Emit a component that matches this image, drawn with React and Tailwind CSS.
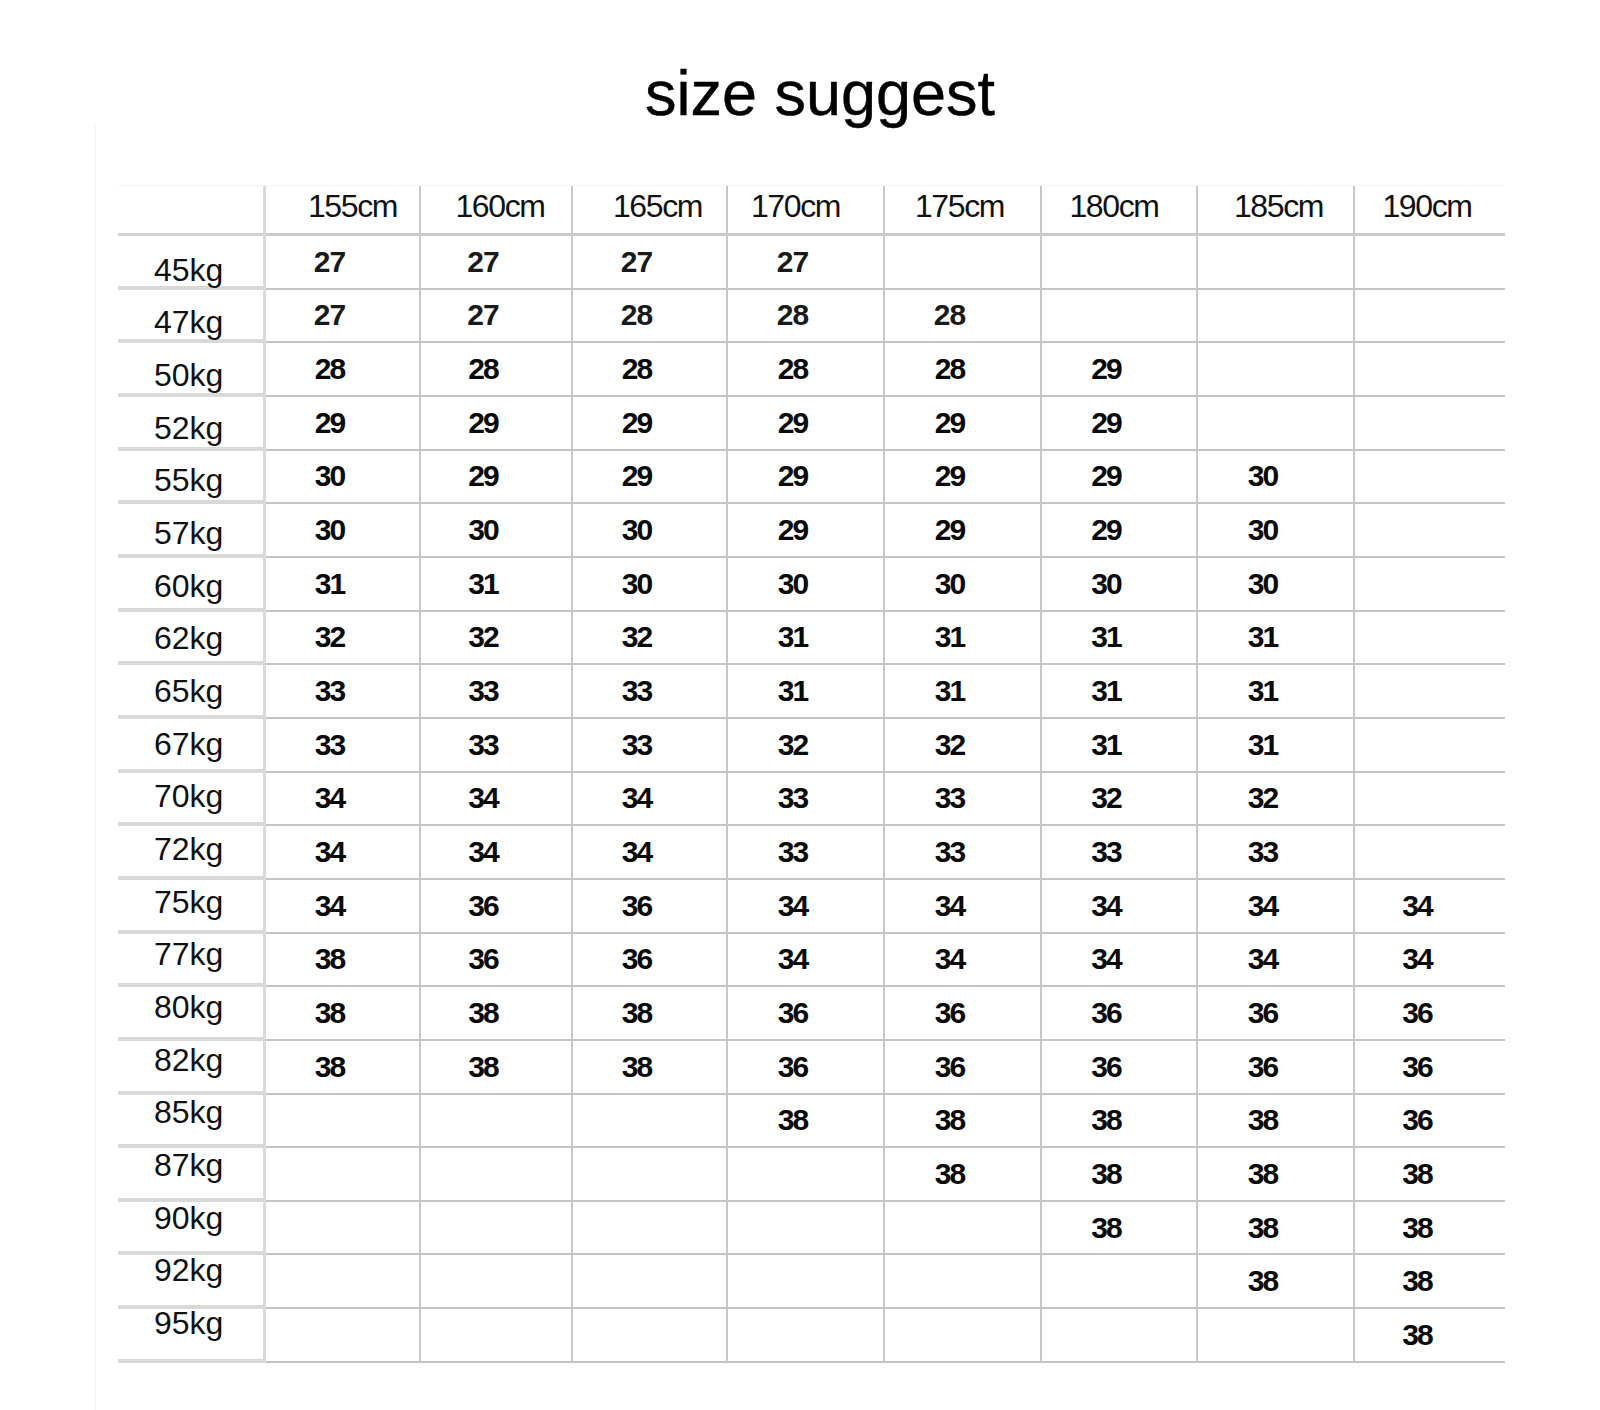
import React from "react";

const heights = ["155cm", "160cm", "165cm", "170cm", "175cm", "180cm", "185cm", "190cm"];

const headerPad = [
  "pl-[20px]",
  "pl-[8px]",
  "pl-[16px]",
  "pr-[20px]",
  "pr-[6px]",
  "pr-[10px]",
  "pl-[6px]",
  "pr-[6px]",
];

const colW = [
  "w-[155px]",
  "w-[152px]",
  "w-[155px]",
  "w-[157px]",
  "w-[157px]",
  "w-[156px]",
  "w-[157px]",
  "w-[150px]",
];

const rows = [
  ["45kg", [27, 27, 27, 27, null, null, null, null]],
  ["47kg", [27, 27, 28, 28, 28, null, null, null]],
  ["50kg", [28, 28, 28, 28, 28, 29, null, null]],
  ["52kg", [29, 29, 29, 29, 29, 29, null, null]],
  ["55kg", [30, 29, 29, 29, 29, 29, 30, null]],
  ["57kg", [30, 30, 30, 29, 29, 29, 30, null]],
  ["60kg", [31, 31, 30, 30, 30, 30, 30, null]],
  ["62kg", [32, 32, 32, 31, 31, 31, 31, null]],
  ["65kg", [33, 33, 33, 31, 31, 31, 31, null]],
  ["67kg", [33, 33, 33, 32, 32, 31, 31, null]],
  ["70kg", [34, 34, 34, 33, 33, 32, 32, null]],
  ["72kg", [34, 34, 34, 33, 33, 33, 33, null]],
  ["75kg", [34, 36, 36, 34, 34, 34, 34, 34]],
  ["77kg", [38, 36, 36, 34, 34, 34, 34, 34]],
  ["80kg", [38, 38, 38, 36, 36, 36, 36, 36]],
  ["82kg", [38, 38, 38, 36, 36, 36, 36, 36]],
  ["85kg", [null, null, null, 38, 38, 38, 38, 36]],
  ["87kg", [null, null, null, null, 38, 38, 38, 38]],
  ["90kg", [null, null, null, null, null, 38, 38, 38]],
  ["92kg", [null, null, null, null, null, null, 38, 38]],
  ["95kg", [null, null, null, null, null, null, null, 38]],
];

function vBorder(ci) {
  return ci === 7 ? "" : "border-r-2 border-r-[#c8c8c8]";
}

export default function App() {
  return (
    <div className="w-[1600px] h-[1410px] bg-white overflow-hidden font-['Liberation_Sans',Arial,sans-serif] text-[#111]">
      {/* title */}
      <div className="flex justify-center pl-[40px] pt-[62px]">
        <h1 className="text-[63px] leading-[63px] h-[63px] font-normal text-[#000] whitespace-nowrap [-webkit-text-stroke:0.4px_#000]">
          size suggest
        </h1>
      </div>

      {/* sheet */}
      <div className="ml-[95px] h-[1285px] border-l border-[#f1f1f1] pl-[22px] pt-[60px]">
        <div className="w-[1387px]">
          {/* header */}
          <div className="flex h-[51px] border-t border-[#f3f3f3]">
            <div className="w-[148px] shrink-0 border-r-[3px] border-r-[#dadada] border-b-[3px] border-b-[#d2d2d2]" />
            {heights.map((h, ci) => (
              <div
                key={h}
                className={`${colW[ci]} shrink-0 flex items-center justify-center pb-[8px] border-b-[3px] border-b-[#cbcbcb] ${vBorder(ci)}`}
              >
                <span
                  className={`${headerPad[ci]} text-[32px] leading-none tracking-[-1.4px] whitespace-nowrap`}
                >
                  {h}
                </span>
              </div>
            ))}
          </div>

          {/* body */}
          {rows.map(([label, vals], ri) => (
            <div key={label} className="flex h-[53.67px]">
              <div className="w-[148px] shrink-0 flex items-center pl-[36px] border-r-[3px] border-r-[#dadada] border-b-[4px] border-b-[#d9d9d9]">
                <span
                  className="text-[32px] leading-none whitespace-nowrap"
                  style={{ transform: `translateY(${(9 - ri * 1.0).toFixed(1)}px)` }}
                >
                  {label}
                </span>
              </div>
              {vals.map((v, ci) => (
                <div
                  key={ci}
                  className={`${colW[ci]} shrink-0 flex items-center justify-center pr-[26px] border-b-2 border-b-[#c4c4c4] ${vBorder(ci)}`}
                >
                  {v !== null && (
                    <span
                      className={`${
                        ri < 2
                          ? "text-[30px] text-[#1a1a1a] tracking-[-1px]"
                          : "text-[30px] text-[#0a0a0a] tracking-[-2px]"
                      } font-bold leading-none whitespace-nowrap`}
                    >
                      {v}
                    </span>
                  )}
                </div>
              ))}
            </div>
          ))}
        </div>
      </div>
    </div>
  );
}
